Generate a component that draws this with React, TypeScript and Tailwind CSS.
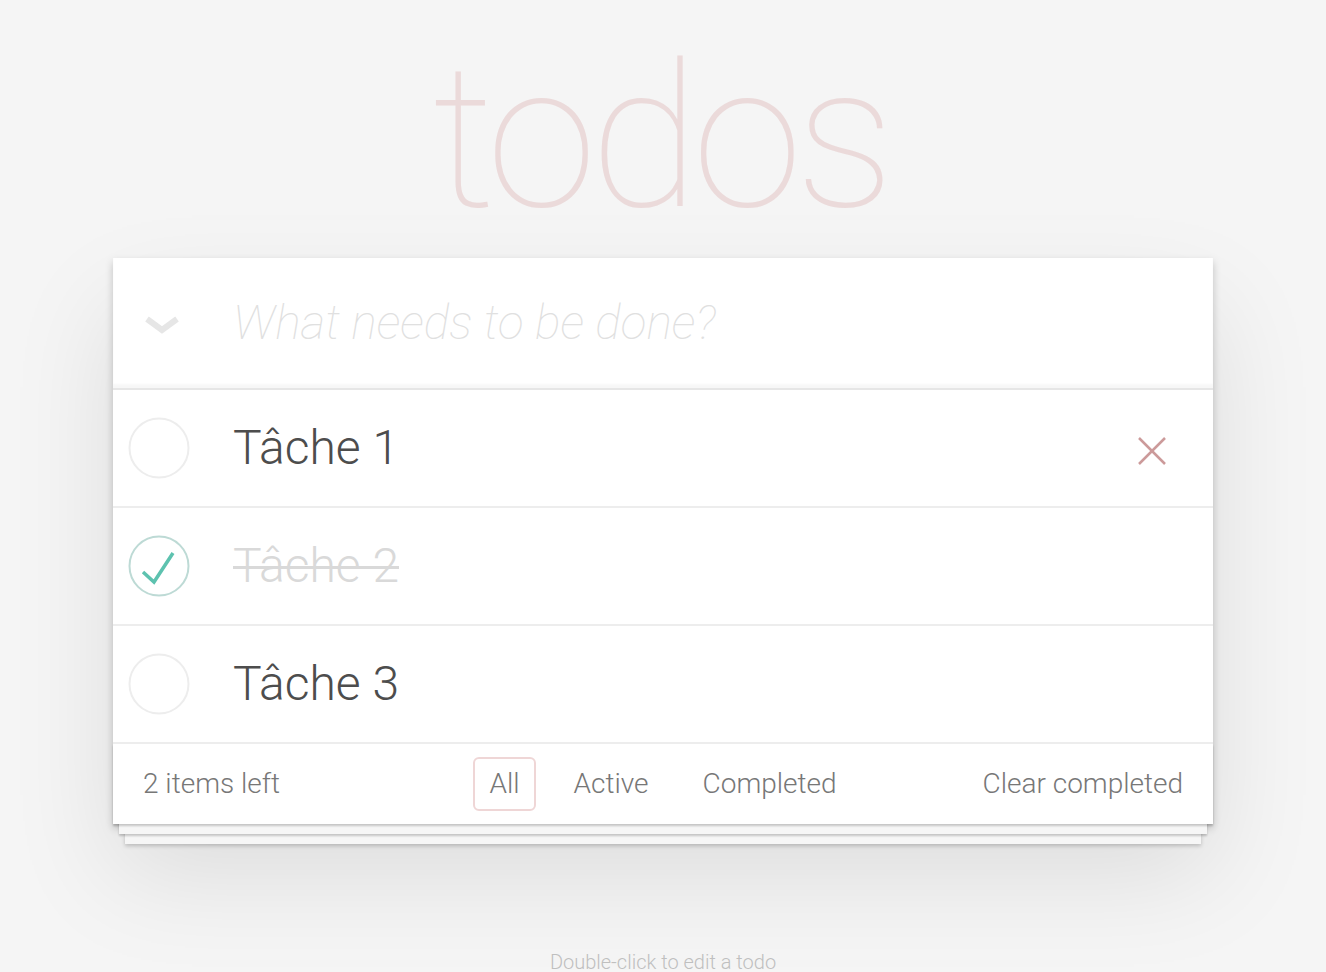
import { useState } from 'react';

type Todo = { id: number; title: string; completed: boolean };

const initialTodos: Todo[] = [
  { id: 1, title: 'Tâche 1', completed: false },
  { id: 2, title: 'Tâche 2', completed: true },
  { id: 3, title: 'Tâche 3', completed: false },
];

const font = { fontFamily: 'Roboto, "Helvetica Neue", Helvetica, Arial, sans-serif' };

const Toggle = ({ checked }: { checked: boolean }) => (
  <svg width="62" height="62" viewBox="0 0 62 62" className="shrink-0">
    <circle cx="31" cy="31" r="29.5" fill="none" stroke={checked ? '#bddad5' : '#ededed'} strokeWidth="2" />
    {checked && (
      <polyline points="15,37 26,47 45,18" fill="none" stroke="#5dc2af" strokeWidth="3.5" />
    )}
  </svg>
);

const TodoRow = ({ todo, hovered }: { todo: Todo; hovered: boolean }) => (
  <li className="flex items-center h-[118px] border-b-2 border-[#ededed]">
    <div className="w-[120px] pl-[15px] shrink-0">
      <Toggle checked={todo.completed} />
    </div>
    <span
      className={
        todo.completed
          ? 'text-[48px] leading-[1.2] font-light text-[#d9d9d9] line-through decoration-[#d9d9d9] decoration-[3px]'
          : 'text-[48px] leading-[1.2] font-light text-[#4d4d4d]'
      }
    >
      {todo.title}
    </span>
    {hovered && (
      <button className="ml-auto mr-[47px] mt-[6px]" aria-label="delete">
        <svg width="28" height="28" viewBox="0 0 28 28">
          <line x1="1" y1="1" x2="27" y2="27" stroke="#cc9a9a" strokeWidth="2.5" />
          <line x1="27" y1="1" x2="1" y2="27" stroke="#cc9a9a" strokeWidth="2.5" />
        </svg>
      </button>
    )}
  </li>
);

export default function App() {
  const [todos] = useState(initialTodos);
  const left = todos.filter((t) => !t.completed).length;

  return (
    <div className="min-h-screen bg-[#f5f5f5] overflow-hidden" style={font}>
      <div className="w-[1100px] mx-auto">
        <h1 className="h-[258px] pt-[38px] pr-[6px] text-center text-[200px] leading-none font-thin tracking-[-7px] text-[#ebdada]">
          todos
        </h1>

        <section className="bg-white shadow-[0_4px_8px_rgba(0,0,0,0.2),0_50px_100px_rgba(0,0,0,0.1)]">
          <header className="flex items-center h-[130px] shadow-[inset_0_-4px_2px_rgba(0,0,0,0.03)]">
            <div className="w-[120px] pl-[32px] pt-[4px] shrink-0">
              <svg width="34" height="22" viewBox="0 0 34 22">
                <polyline points="2,5 17,16 32,5" fill="none" stroke="#e6e6e6" strokeWidth="6" />
              </svg>
            </div>
            <input
              className="flex-1 bg-transparent outline-none text-[48px] font-light text-[#4d4d4d] placeholder:italic placeholder:font-thin placeholder:text-[#e0e0e0]"
              placeholder="What needs to be done?"
              style={font}
            />
          </header>

          <ul className="border-t-2 border-[#e6e6e6]">
            {todos.map((t) => (
              <TodoRow key={t.id} todo={t} hovered={t.id === 1} />
            ))}
          </ul>

          <footer className="grid grid-cols-[1fr_auto_1fr] items-center h-[80px] px-[30px] text-[28px] font-light text-[#777] shadow-[0_2px_2px_rgba(0,0,0,0.2),0_16px_0_-6px_#f6f6f6,0_18px_2px_-6px_rgba(0,0,0,0.2),0_32px_0_-12px_#f6f6f6,0_34px_4px_-12px_rgba(0,0,0,0.2)]">
            <span>{left} items left</span>
            <div className="flex items-center gap-[22px]">
              <a className="px-[14px] py-[4px] rounded-[6px] border-2 border-[#efd6d6]">All</a>
              <a className="px-[14px] py-[4px] rounded-[6px] border-2 border-transparent">Active</a>
              <a className="px-[14px] py-[4px] rounded-[6px] border-2 border-transparent">Completed</a>
            </div>
            <span className="text-right">Clear completed</span>
          </footer>
        </section>

        <p className="mt-[128px] text-center text-[20px] leading-none font-light text-[#bfbfbf]">
          Double-click to edit a todo
        </p>
      </div>
    </div>
  );
}
